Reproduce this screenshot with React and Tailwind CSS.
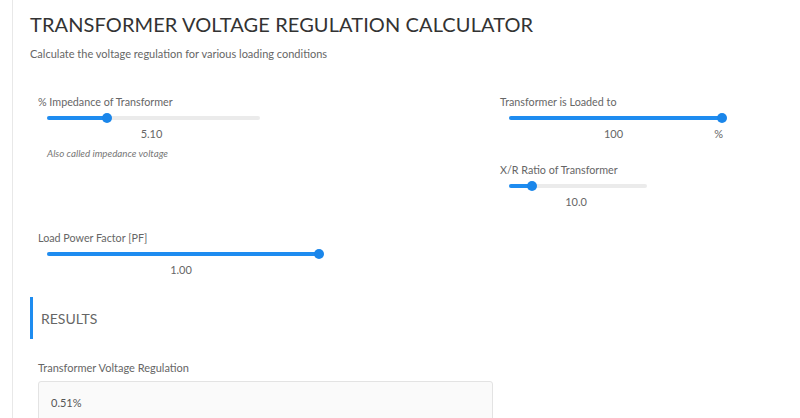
import React from 'react';

const font = { fontFamily: 'Lato, "Open Sans", sans-serif' };

function Slider({ label, width, pct, value, unit, note }) {
  return (
    <div>
      <p className="text-[10.75px] leading-[14px] text-[#666]">{label}</p>
      <div className="ml-[9px] mt-[4px]" style={{ width }}>
        <div className="relative h-[10px] flex items-center">
          <div className="h-[4px] w-full rounded-full bg-[#ebebeb]" />
          <div className="absolute left-0 h-[4px] rounded-full bg-[#1e8cf0]" style={{ width: `${pct}%` }} />
          <div
            className="absolute top-0 h-[10px] w-[10px] -ml-[5px] rounded-full bg-[#1a86ea]"
            style={{ left: `${pct}%` }}
          />
        </div>
        <div className="mt-[4px] grid grid-cols-[1fr_auto_1fr] text-[11px] leading-[14px] text-[#666]">
          <span />
          <span className="-ml-[4px]">{value}</span>
          <span className="text-right -mr-[1px]">{unit}</span>
        </div>
        {note && <p className="mt-[6px] text-[9.75px] italic leading-[12px] text-[#777]">{note}</p>}
      </div>
    </div>
  );
}

export default function App() {
  return (
    <div className="h-[418px] w-[800px] overflow-hidden bg-white" style={font}>
      <div className="ml-[12px] h-full border-l border-[#e8e8e8] pl-[17px] pt-[12px]">
        <h1 className="text-[20px] leading-[24px] text-[#333] tracking-[0.1px]">
          TRANSFORMER VOLTAGE REGULATION CALCULATOR
        </h1>
        <p className="mt-[11px] text-[11px] leading-[14px] text-[#666]">
          Calculate the voltage regulation for various loading conditions
        </p>

        <div className="mt-[34px] flex pl-[8px]">
          <div className="w-[462px]">
            <Slider
              label="% Impedance of Transformer"
              width={213}
              pct={28}
              value="5.10"
              note="Also called impedance voltage"
            />
          </div>
          <div className="flex flex-col gap-[22px]">
            <Slider label="Transformer is Loaded to" width={213} pct={100} value="100" unit="%" />
            <Slider label="X/R Ratio of Transformer" width={138} pct={17} value="10.0" />
          </div>
        </div>

        <div className="mt-[22px] pl-[8px]">
          <Slider label="Load Power Factor [PF]" width={272} pct={100} value="1.00" />
        </div>

        <div className="mt-[20px] flex h-[42px] items-center border-l-[3px] border-[#1e8cf0] pl-[8px]">
          <h2 className="text-[14px] text-[#666]">RESULTS</h2>
        </div>

        <div className="mt-[22px] pl-[8px]">
          <p className="text-[11px] leading-[14px] text-[#666]">Transformer Voltage Regulation</p>
          <div className="mt-[6px] h-[60px] w-[455px] rounded-[3px] border border-[#e3e3e3] bg-[#fafafa] px-[12px] pt-[7px]">
            <span className="text-[11px] text-[#555]">0.51%</span>
          </div>
        </div>
      </div>
    </div>
  );
}
